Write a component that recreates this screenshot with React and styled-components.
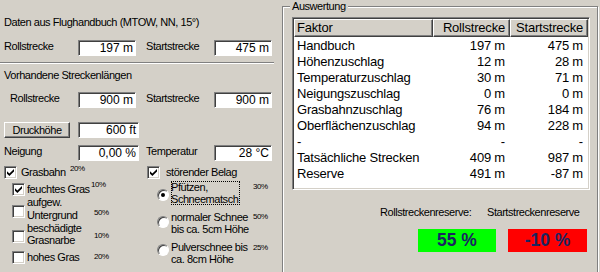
import React from "react";
import styled, { createGlobalStyle } from "styled-components";

const GlobalStyle = createGlobalStyle`
  html, body { margin: 0; padding: 0; background: #d4d0c8; }
  body { font-family: "Liberation Sans", Arial, sans-serif; color: #000; }
  #root { width: 600px; height: 272px; overflow: hidden; }
`;

const Window = styled.div`
  display: flex;
  width: 600px;
  height: 272px;
  overflow: hidden;
  background: #d4d0c8;
`;

const LeftPanel = styled.div`
  width: 276px;
  flex: none;
  padding-left: 4px;
  display: flex;
  flex-direction: column;
`;

const Text = styled.div`
  font-size: 11px;
  letter-spacing: -0.45px;
  line-height: 13px;
  white-space: nowrap;
`;

const Heading = styled(Text)`
  margin-top: ${p => p.$top}px;
`;

const FieldRow = styled.div`
  display: grid;
  grid-template-columns: 74px ${p => p.$w}px 1fr 58px;
  width: 268px;
  height: 16px;
  margin-top: ${p => p.$top}px;
`;

const FieldLabel = styled(Text)`
  padding-left: ${p => p.$pad || 0}px;
`;

const Edit = styled.div`
  box-sizing: border-box;
  height: 16px;
  background: #fff;
  border: 1px solid;
  border-color: #808080 #fff #fff #808080;
  box-shadow: inset 1px 1px 0 #404040;
  font-size: 12px;
  line-height: 14px;
  text-align: right;
  padding-right: 2px;
  white-space: nowrap;
  overflow: hidden;
`;

const Button = styled.div`
  box-sizing: border-box;
  width: 66px;
  height: 16px;
  border: 1px solid;
  border-color: #fff #404040 #404040 #fff;
  box-shadow: inset -1px -1px 0 #808080;
  font-size: 11px;
  letter-spacing: -0.45px;
  line-height: 14px;
  text-align: center;
`;

const Separator = styled.div`
  margin: 6px 0 0 -4px;
  width: 274px;
  height: 0;
  border-top: 1px solid #808080;
  border-bottom: 1px solid #fff;
`;

const CheckRow = styled.div`
  display: grid;
  grid-template-columns: 143px 1fr;
  margin-top: 5px;
`;

const Column = styled.div`
  display: flex;
  flex-direction: column;
  padding-left: ${p => p.$pad || 0}px;
`;

const Option = styled.div`
  display: flex;
  align-items: flex-start;
  height: ${p => p.$h}px;
  margin-top: ${p => p.$top || 0}px;
`;

const Mark = styled.span`
  margin-top: ${p => p.$top || 0}px;
  flex: none;
  display: flex;
`;

const Box = styled.span`
  box-sizing: border-box;
  width: 13px;
  height: 13px;
  background: #fff;
  border: 1px solid;
  border-color: #808080 #fff #fff #808080;
  box-shadow: inset 1px 1px 0 #404040, inset -1px -1px 0 #d4d0c8;
  display: flex;
  align-items: center;
  justify-content: center;
`;

const Radio = styled.span`
  box-sizing: border-box;
  width: 12px;
  height: 12px;
  border-radius: 50%;
  background: #fff;
  border: 1px solid;
  border-color: #808080 #fff #fff #808080;
  box-shadow: inset 1px 1px 0 #404040;
  display: flex;
  align-items: center;
  justify-content: center;
  &::after {
    content: "";
    width: 4px;
    height: 4px;
    border-radius: 50%;
    background: ${p => (p.$on ? "#000" : "transparent")};
  }
`;

const OptionLabel = styled.div`
  font-size: 11px;
  letter-spacing: -0.45px;
  line-height: ${p => p.$lh || 13}px;
  margin-left: ${p => p.$gap}px;
  width: ${p => p.$w}px;
  flex: none;
  white-space: nowrap;
  overflow: hidden;
  outline: ${p => (p.$focus ? "1px dotted #000" : "none")};
  outline-offset: -1px;
`;

const Pct = styled.span`
  flex: none;
  font-size: 8px;
  letter-spacing: -0.4px;
  line-height: 8px;
  margin-left: ${p => p.$gap}px;
  margin-top: ${p => p.$top}px;
`;

const RightPanel = styled.div`
  flex: 1;
  padding: 6px 2px 0 2px;
`;

const GroupBox = styled.div`
  position: relative;
  box-sizing: border-box;
  height: 290px;
  border: 1px solid #808080;
  box-shadow: inset 1px 1px 0 #fff, 1px 1px 0 #fff;
  padding: 10px 7px 0 9px;
`;

const GroupLabel = styled(Text)`
  position: absolute;
  top: -7px;
  left: 7px;
  padding: 0 2px;
  background: #d4d0c8;
`;

const ListView = styled.div`
  box-sizing: border-box;
  height: 173px;
  background: #fff;
  border: 1px solid;
  border-color: #808080 #fff #fff #808080;
  box-shadow: inset 1px 1px 0 #404040, inset -1px -1px 0 #d4d0c8;
  padding: 1px;
`;

const cols = "139px 77px 1fr";

const HeaderRow = styled.div`
  display: grid;
  grid-template-columns: ${cols};
  height: 18px;
`;

const HeaderCell = styled.div`
  box-sizing: border-box;
  background: #d4d0c8;
  border: 1px solid;
  border-color: #fff #404040 #404040 #fff;
  box-shadow: inset -1px -1px 0 #808080;
  font-size: 13px;
  letter-spacing: -0.2px;
  line-height: 16px;
  text-align: ${p => p.$align || "left"};
  padding: 0 4px 0 2px;
  white-space: nowrap;
  overflow: hidden;
`;

const Body = styled.div`
  padding-top: 1px;
`;

const Row = styled.div`
  display: grid;
  grid-template-columns: ${cols};
  height: 16px;
  font-size: 13px;
  letter-spacing: -0.2px;
  line-height: 16px;
`;

const Cell = styled.div`
  text-align: ${p => p.$align || "left"};
  padding: ${p => (p.$align === "right" ? "0 5px 0 0" : "0 0 0 3px")};
  white-space: nowrap;
`;

const ReserveLabels = styled.div`
  display: grid;
  grid-template-columns: 107px auto;
  margin: 16px 0 0 88px;
`;

const ReserveBoxes = styled.div`
  display: flex;
  gap: 12px;
  margin: 10px 0 0 126px;
`;

const ReserveBox = styled.div`
  width: ${p => p.$w}px;
  height: 23px;
  background: ${p => p.$bg};
  color: #1a2560;
  font-size: 17.5px;
  font-weight: bold;
  line-height: 23px;
  text-align: center;
`;

const Check = () => (
  <svg width="7" height="7" viewBox="0 0 7 7">
    <path d="M0 2.2 L2.4 4.4 L7 0 L7 2.6 L2.4 7 L0 4.8 Z" fill="#000" />
  </svg>
);

const CheckBox = ({ checked }) => <Box>{checked && <Check />}</Box>;

const rows = [
  ["Handbuch", "197 m", "475 m"],
  ["Höhenzuschlag", "12 m", "28 m"],
  ["Temperaturzuschlag", "30 m", "71 m"],
  ["Neigungszuschlag", "0 m", "0 m"],
  ["Grasbahnzuschlag", "76 m", "184 m"],
  ["Oberflächenzuschlag", "94 m", "228 m"],
  ["-", "-", "-"],
  ["Tatsächliche Strecken", "409 m", "987 m"],
  ["Reserve", "491 m", "-87 m"],
];

const grass = [
  { label: "feuchtes Gras", pct: "10%", on: true, h: 13, top: 4, mark: 0, pGap: 1, pTop: -2 },
  { label: "aufgew.\nUntergrund", pct: "50%", h: 26, mark: 9, pGap: 4, pTop: 13 },
  { label: "beschädigte\nGrasnarbe", pct: "10%", h: 26, mark: 8, pGap: 4, pTop: 10, lh: 12 },
  { label: "hohes Gras", pct: "20%", h: 13, top: 3, mark: 0, pGap: 4, pTop: 2 },
];

const surface = [
  { label: "Pfützen,\nSchneematsch", pct: "30%", on: true, top: 2, mark: 8, w: 69, pGap: 13, pTop: 2 },
  { label: "normaler Schnee\nbis ca. 5cm Höhe", pct: "50%", top: 6, mark: 5, w: 80, pGap: 2, pTop: 2 },
  { label: "Pulverschnee bis\nca. 8cm Höhe", pct: "25%", top: 6, mark: 3, w: 80, pGap: 2, pTop: 3 },
];

export default function App() {
  return (
    <>
      <GlobalStyle />
      <Window>
        <LeftPanel>
          <Heading $top={16}>Daten aus Flughandbuch (MTOW, NN, 15°)</Heading>
          <FieldRow $top={11} $w={58}>
            <FieldLabel>Rollstrecke</FieldLabel>
            <Edit>197 m</Edit>
            <FieldLabel $pad={10}>Startstrecke</FieldLabel>
            <Edit>475 m</Edit>
          </FieldRow>
          <Separator />
          <Heading $top={5}>Vorhandene Streckenlängen</Heading>
          <FieldRow $top={10} $w={58}>
            <FieldLabel $pad={6}>Rollstrecke</FieldLabel>
            <Edit>900 m</Edit>
            <FieldLabel $pad={10}>Startstrecke</FieldLabel>
            <Edit>900 m</Edit>
          </FieldRow>
          <FieldRow $top={14} $w={61}>
            <Button>Druckhöhe</Button>
            <Edit>600 ft</Edit>
          </FieldRow>
          <FieldRow $top={7} $w={61}>
            <FieldLabel>Neigung</FieldLabel>
            <Edit>0,00 %</Edit>
            <FieldLabel $pad={7}>Temperatur</FieldLabel>
            <Edit>28 °C</Edit>
          </FieldRow>
          <CheckRow>
            <Column>
              <Option $h={13}>
                <Mark><CheckBox checked /></Mark>
                <OptionLabel $gap={4} $w={45}>Grasbahn</OptionLabel>
                <Pct $gap={4} $top={-1}>20%</Pct>
              </Option>
              <Column $pad={8}>
                {grass.map(g => (
                  <Option key={g.label} $h={g.h} $top={g.top}>
                    <Mark $top={g.mark}><CheckBox checked={g.on} /></Mark>
                    <OptionLabel $gap={2} $w={63} $lh={g.lh}>
                      {g.label.split("\n").map(l => <div key={l}>{l}</div>)}
                    </OptionLabel>
                    <Pct $gap={g.pGap} $top={g.pTop}>{g.pct}</Pct>
                  </Option>
                ))}
              </Column>
            </Column>
            <Column>
              <Option $h={13}>
                <Mark><CheckBox checked /></Mark>
                <OptionLabel $gap={6} $w={90}>störender Belag</OptionLabel>
              </Option>
              <Column $pad={10}>
                {surface.map(s => (
                  <Option key={s.label} $h={24} $top={s.top}>
                    <Mark $top={s.mark}><Radio $on={s.on} /></Mark>
                    <OptionLabel $gap={2} $w={s.w} $lh={12} $focus={s.on}>
                      {s.label.split("\n").map(l => <div key={l}>{l}</div>)}
                    </OptionLabel>
                    <Pct $gap={s.pGap} $top={s.pTop}>{s.pct}</Pct>
                  </Option>
                ))}
              </Column>
            </Column>
          </CheckRow>
        </LeftPanel>
        <RightPanel>
          <GroupBox>
            <GroupLabel>Auswertung</GroupLabel>
            <ListView>
              <HeaderRow>
                <HeaderCell>Faktor</HeaderCell>
                <HeaderCell $align="right">Rollstrecke</HeaderCell>
                <HeaderCell $align="right">Startstrecke</HeaderCell>
              </HeaderRow>
              <Body>
                {rows.map(([name, roll, start], i) => (
                  <Row key={i}>
                    <Cell>{name}</Cell>
                    <Cell $align="right">{roll}</Cell>
                    <Cell $align="right">{start}</Cell>
                  </Row>
                ))}
              </Body>
            </ListView>
            <ReserveLabels>
              <Text>Rollstreckenreserve:</Text>
              <Text>Startstreckenreserve</Text>
            </ReserveLabels>
            <ReserveBoxes>
              <ReserveBox $w={78} $bg="#00ff00">55 %</ReserveBox>
              <ReserveBox $w={79} $bg="#ff0000">-10 %</ReserveBox>
            </ReserveBoxes>
          </GroupBox>
        </RightPanel>
      </Window>
    </>
  );
}
